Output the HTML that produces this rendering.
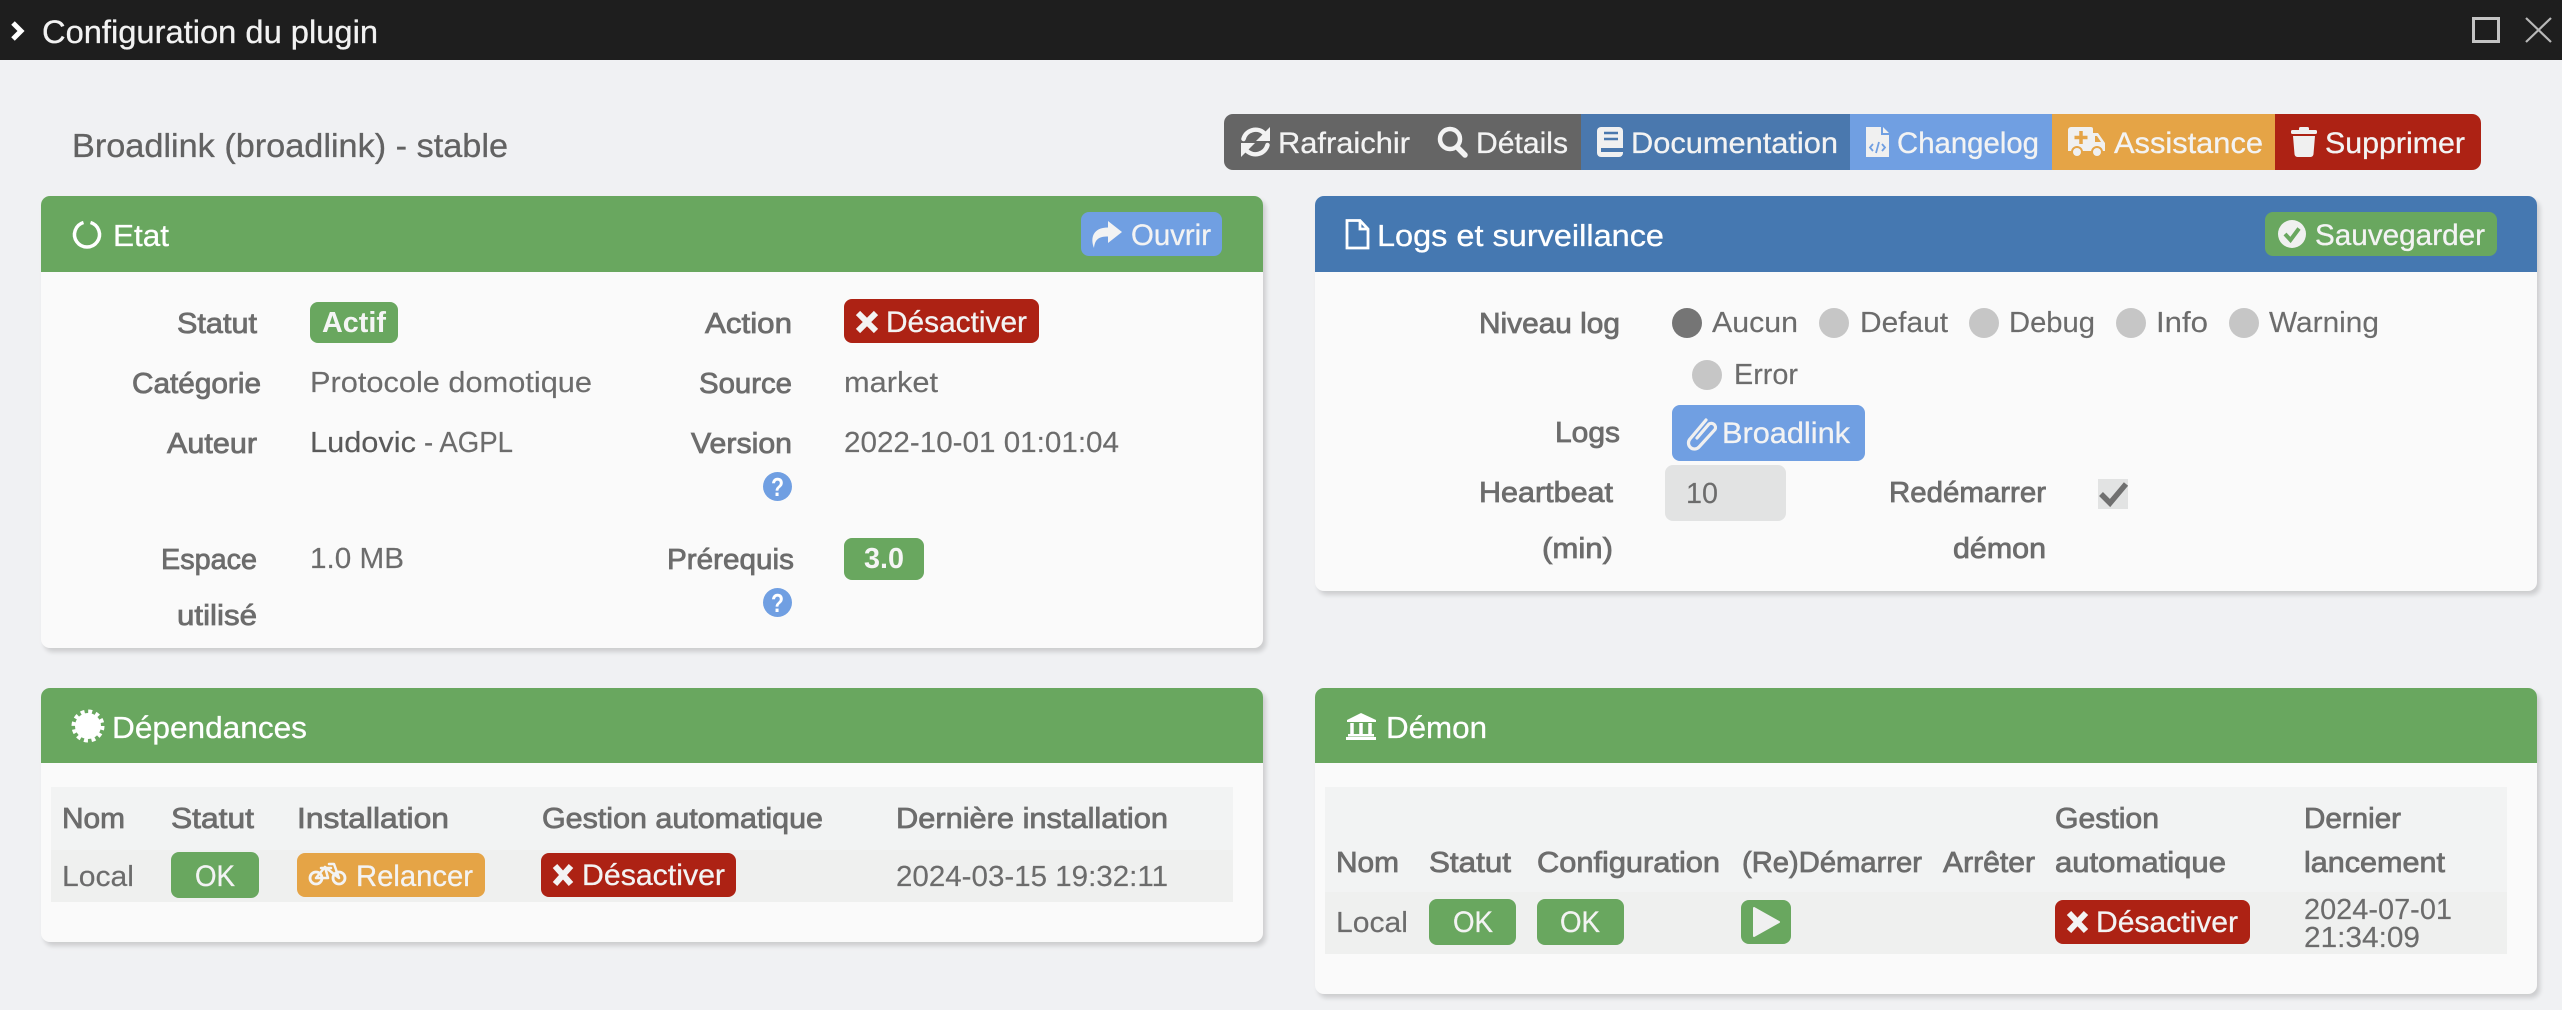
<!DOCTYPE html>
<html lang="fr">
<head>
<meta charset="utf-8">
<title>Configuration du plugin</title>
<style>
html,body{margin:0;padding:0;width:2562px;height:1010px;overflow:hidden;background:#f0f1f3}
.p{position:absolute;background:#fafafa;border-radius:9px;box-shadow:3px 4px 5px rgba(0,0,0,.15)}
svg{position:absolute;left:0;top:0;font-family:"Liberation Sans",sans-serif}
text{font-size:29px;fill:#6c6c6c;stroke:#6c6c6c;stroke-width:.15px}
.m{stroke:#6c6c6c;stroke-width:.8px}
.h{font-size:31px;fill:#fff;stroke:#fff;stroke-width:.3px}
.b{font-size:30px;fill:#f3f3f3;stroke:#f3f3f3;stroke-width:.3px}
.s{font-weight:bold;fill:#f5f5f5;stroke:none}
.k{fill:#5a5a5a;stroke:#5a5a5a}
.ic{fill:none;stroke:#f3f3f3;stroke-linecap:round;stroke-linejoin:round}
.x{stroke:#f3f3f3;stroke-width:6;stroke-linecap:butt}
</style>
</head>
<body>
<div class="p" style="left:41px;top:196px;width:1222px;height:452px"></div>
<div class="p" style="left:1315px;top:196px;width:1222px;height:395px"></div>
<div class="p" style="left:41px;top:688px;width:1222px;height:254px"></div>
<div class="p" style="left:1315px;top:688px;width:1222px;height:306px"></div>
<svg width="2562" height="1010" viewBox="0 0 2562 1010" xmlns="http://www.w3.org/2000/svg">
<!-- title bar -->
<rect x="0" y="0" width="2562" height="60" fill="#1e1e1e"/>
<polyline points="13,23 21,31 13,39" fill="none" stroke="#fff" stroke-width="5"/>
<text x="42" y="43" textLength="336" lengthAdjust="spacingAndGlyphs" style="font-size:32px;fill:#f2f2f2;stroke:#f2f2f2;stroke-width:.3px">Configuration du plugin</text>
<rect x="2473.5" y="18.5" width="25" height="23" fill="none" stroke="#c4c4c4" stroke-width="3"/>
<path d="M2526 18 L2551 42 M2551 18 L2526 42" stroke="#b8b8b8" stroke-width="2.2" fill="none"/>

<text x="72" y="157" textLength="436" lengthAdjust="spacingAndGlyphs" style="font-size:33px;fill:#626262;stroke:#626262;stroke-width:.3px">Broadlink (broadlink) - stable</text>

<!-- action group -->
<path d="M1233 114 H1581 V170 H1233 a9 9 0 0 1 -9 -9 V123 a9 9 0 0 1 9 -9Z" fill="#656565"/>
<rect x="1581" y="114" width="269" height="56" fill="#4a78ae"/>
<rect x="1850" y="114" width="202" height="56" fill="#709fe2"/>
<rect x="2052" y="114" width="223" height="56" fill="#e5a446"/>
<path d="M2275 114 H2472 a9 9 0 0 1 9 9 V161 a9 9 0 0 1 -9 9 H2275Z" fill="#ad2214"/>

<!-- refresh -->
<path class="ic" stroke-width="4.5" stroke-linecap="butt" d="M1243.5 139 A12.5 12.5 0 0 1 1264 133"/>
<polygon points="1270,127 1270,141 1256,141" fill="#f3f3f3"/>
<path class="ic" stroke-width="4.5" stroke-linecap="butt" d="M1267.5 145 A12.5 12.5 0 0 1 1247 151"/>
<polygon points="1241,157 1241,143 1255,143" fill="#f3f3f3"/>
<text class="b" x="1278" y="153" textLength="132" lengthAdjust="spacingAndGlyphs">Rafraichir</text>
<!-- search -->
<circle class="ic" cx="1450" cy="139" r="10" stroke-width="4.5"/>
<path class="ic" d="M1458 148 L1465 155" stroke-width="5.5"/>
<text class="b" x="1476" y="153" textLength="92" lengthAdjust="spacingAndGlyphs">Détails</text>
<!-- book -->
<rect x="1597" y="127" width="26" height="30" rx="4" fill="#f0f0f0"/>
<path d="M1604 133 H1618 M1604 139 H1618" stroke="#4a78ae" stroke-width="2.5"/>
<rect x="1601" y="148" width="22" height="4" fill="#4a78ae"/>
<text class="b" x="1631" y="153" textLength="207" lengthAdjust="spacingAndGlyphs">Documentation</text>
<!-- file code -->
<path d="M1866 127 H1881 V135 H1889 V157 H1866Z M1883 127 L1889 133 H1883Z" fill="#f0f0f0"/>
<path d="M1873 144 L1870 147.5 L1873 151 M1882 144 L1885 147.5 L1882 151 M1879 142 L1876 153" fill="none" stroke="#709fe2" stroke-width="1.8"/>
<text class="b" x="1897" y="153" textLength="142" lengthAdjust="spacingAndGlyphs">Changelog</text>
<!-- ambulance -->
<path d="M2071 127 H2091 a2 2 0 0 1 2 2 V133 H2098 L2105 143 V151 H2068 V130 a3 3 0 0 1 3 -3Z" fill="#f0f0f0"/>
<path d="M2081 131 V144 M2074.5 137.5 H2087.5" stroke="#e5a446" stroke-width="3.5"/>
<path d="M2095 136 V142 H2101 L2097 136Z" fill="#e5a446"/>
<circle cx="2077" cy="152" r="5" fill="#f0f0f0" stroke="#e5a446" stroke-width="2"/>
<circle cx="2097" cy="152" r="5" fill="#f0f0f0" stroke="#e5a446" stroke-width="2"/>
<text class="b" x="2114" y="153" textLength="149" lengthAdjust="spacingAndGlyphs">Assistance</text>
<!-- trash -->
<rect x="2291" y="130" width="26" height="4" rx="1.5" fill="#f0f0f0"/>
<rect x="2299" y="127" width="10" height="4" rx="1.5" fill="#f0f0f0"/>
<path d="M2293 136 H2315 L2313.5 154 a3 3 0 0 1 -3 3 H2297.5 a3 3 0 0 1 -3 -3Z" fill="#f0f0f0"/>
<text class="b" x="2325" y="153" textLength="140" lengthAdjust="spacingAndGlyphs">Supprimer</text>

<!-- Etat header -->
<path d="M50 196 H1254 a9 9 0 0 1 9 9 V272 H41 V205 a9 9 0 0 1 9 -9Z" fill="#69a75f"/>
<path d="M90.5 222.5 A12.5 12.5 0 1 1 83.5 222.5" fill="none" stroke="#fff" stroke-width="3.5"/>
<text class="h" x="113" y="246" textLength="56" lengthAdjust="spacingAndGlyphs">Etat</text>
<rect x="1081" y="212" width="141" height="44" rx="8" fill="#709fe2"/>
<path d="M1108 221 L1122 232 L1108 243 V236.5 C1099 236.5 1095 239 1094 248 C1090 238 1093 227.5 1108 227.5Z" fill="#f3f3f3"/>
<text class="b" x="1131" y="245" textLength="80" lengthAdjust="spacingAndGlyphs">Ouvrir</text>

<!-- Logs header -->
<path d="M1324 196 H2528 a9 9 0 0 1 9 9 V272 H1315 V205 a9 9 0 0 1 9 -9Z" fill="#4578b1"/>
<path d="M1347 220.5 H1360 L1368 229 V248 H1347Z M1360 220.5 V229 H1368" fill="none" stroke="#fff" stroke-width="2.8"/>
<text class="h" x="1377" y="246" textLength="287" lengthAdjust="spacingAndGlyphs">Logs et surveillance</text>
<rect x="2265" y="212" width="232" height="44" rx="8" fill="#69a75f"/>
<circle cx="2292" cy="234" r="14" fill="#f0f0f0"/>
<path d="M2285 234 L2290.5 240 L2299 228.5" fill="none" stroke="#69a75f" stroke-width="4"/>
<text class="b" x="2315" y="245" textLength="170" lengthAdjust="spacingAndGlyphs">Sauvegarder</text>

<!-- Etat body -->
<text class="m" x="177" y="333" textLength="80" lengthAdjust="spacingAndGlyphs">Statut</text>
<rect x="310" y="302" width="88" height="41" rx="8" fill="#69a75f"/>
<text class="s" x="322" y="332" textLength="64" lengthAdjust="spacingAndGlyphs">Actif</text>
<text class="m" x="705" y="333" textLength="87" lengthAdjust="spacingAndGlyphs">Action</text>
<rect x="844" y="299" width="195" height="44" rx="8" fill="#ad2214"/>
<path class="x" d="M858 313 L876 331 M876 313 L858 331"/>
<text class="b" x="886" y="332" textLength="141" lengthAdjust="spacingAndGlyphs">Désactiver</text>

<text class="m" x="132" y="393" textLength="129" lengthAdjust="spacingAndGlyphs">Catégorie</text>
<text x="310" y="392" textLength="282" lengthAdjust="spacingAndGlyphs">Protocole domotique</text>
<text class="m" x="699" y="393" textLength="93" lengthAdjust="spacingAndGlyphs">Source</text>
<text x="844" y="392" textLength="94" lengthAdjust="spacingAndGlyphs">market</text>

<text class="m" x="167" y="453" textLength="90" lengthAdjust="spacingAndGlyphs">Auteur</text>
<text class="k" x="310" y="452" textLength="106" lengthAdjust="spacingAndGlyphs">Ludovic</text>
<text x="424" y="452" textLength="89" lengthAdjust="spacingAndGlyphs">- AGPL</text>
<text class="m" x="691" y="453" textLength="101" lengthAdjust="spacingAndGlyphs">Version</text>
<text x="844" y="452" textLength="275" lengthAdjust="spacingAndGlyphs">2022-10-01 01:01:04</text>
<circle cx="777.5" cy="486.5" r="14.5" fill="#709fe2"/>
<text x="771" y="496" textLength="13" lengthAdjust="spacingAndGlyphs" style="font-size:26px;font-weight:bold;fill:#fff;stroke:none">?</text>

<text class="m" x="161" y="569" textLength="96" lengthAdjust="spacingAndGlyphs">Espace</text>
<text x="310" y="568" textLength="94" lengthAdjust="spacingAndGlyphs">1.0 MB</text>
<text class="m" x="667" y="569" textLength="127" lengthAdjust="spacingAndGlyphs">Prérequis</text>
<rect x="844" y="538" width="80" height="42" rx="8" fill="#69a75f"/>
<text class="s" x="864" y="568" textLength="40" lengthAdjust="spacingAndGlyphs">3.0</text>
<circle cx="777.5" cy="602.5" r="14.5" fill="#709fe2"/>
<text x="771" y="612" textLength="13" lengthAdjust="spacingAndGlyphs" style="font-size:26px;font-weight:bold;fill:#fff;stroke:none">?</text>
<text class="m" x="177" y="625" textLength="80" lengthAdjust="spacingAndGlyphs">utilisé</text>

<!-- Logs body -->
<text class="m" x="1479" y="333" textLength="141" lengthAdjust="spacingAndGlyphs">Niveau log</text>
<circle cx="1687" cy="323" r="15" fill="#757575"/>
<text x="1712" y="332" textLength="86" lengthAdjust="spacingAndGlyphs">Aucun</text>
<circle cx="1834" cy="323" r="15" fill="#c6c6c6"/>
<text x="1860" y="332" textLength="88" lengthAdjust="spacingAndGlyphs">Defaut</text>
<circle cx="1984" cy="323" r="15" fill="#c6c6c6"/>
<text x="2009" y="332" textLength="86" lengthAdjust="spacingAndGlyphs">Debug</text>
<circle cx="2131" cy="323" r="15" fill="#c6c6c6"/>
<text x="2156" y="332" textLength="52" lengthAdjust="spacingAndGlyphs">Info</text>
<circle cx="2244" cy="323" r="15" fill="#c6c6c6"/>
<text x="2269" y="332" textLength="110" lengthAdjust="spacingAndGlyphs">Warning</text>
<circle cx="1707" cy="375" r="15" fill="#c6c6c6"/>
<text x="1734" y="384" textLength="64" lengthAdjust="spacingAndGlyphs">Error</text>

<text class="m" x="1555" y="442" textLength="65" lengthAdjust="spacingAndGlyphs">Logs</text>
<rect x="1672" y="405" width="193" height="56" rx="8" fill="#709fe2"/>
<path d="M1697 438 L1709 424 a4.2 4.2 0 0 1 6 5.5 L1699 447 a6 6 0 0 1 -9 -8 L1706 420" fill="none" stroke="#f0f0f0" stroke-width="3.2" stroke-linecap="round"/>
<text class="b" x="1722" y="443" textLength="128" lengthAdjust="spacingAndGlyphs">Broadlink</text>

<text class="m" x="1479" y="502" textLength="134" lengthAdjust="spacingAndGlyphs">Heartbeat</text>
<text class="m" x="1542" y="558" textLength="71" lengthAdjust="spacingAndGlyphs">(min)</text>
<rect x="1665" y="465" width="121" height="56" rx="8" fill="#e2e3e3"/>
<text x="1686" y="503" textLength="32" lengthAdjust="spacingAndGlyphs">10</text>
<text class="m" x="1889" y="502" textLength="157" lengthAdjust="spacingAndGlyphs">Redémarrer</text>
<text class="m" x="1953" y="558" textLength="93" lengthAdjust="spacingAndGlyphs">démon</text>
<rect x="2098" y="479" width="30" height="30" fill="#e2e3e3"/>
<path d="M2101 494 L2110 503 L2126 484" fill="none" stroke="#707070" stroke-width="5.5"/>

<!-- Dependances -->
<path d="M50 688 H1254 a9 9 0 0 1 9 9 V763 H41 V697 a9 9 0 0 1 9 -9Z" fill="#69a75f"/>
<circle cx="88" cy="726" r="13" fill="#fff"/>
<circle cx="88" cy="726" r="14.5" fill="none" stroke="#fff" stroke-width="4" stroke-dasharray="4 3.6"/>
<text class="h" x="112" y="738" textLength="195" lengthAdjust="spacingAndGlyphs">Dépendances</text>
<rect x="51" y="787" width="1182" height="63" fill="#f2f3f3"/>
<rect x="51" y="850" width="1182" height="52" fill="#eff0ef"/>
<g>
<text class="m" x="62" y="828" textLength="63" lengthAdjust="spacingAndGlyphs">Nom</text>
<text class="m" x="171" y="828" textLength="83" lengthAdjust="spacingAndGlyphs">Statut</text>
<text class="m" x="297" y="828" textLength="152" lengthAdjust="spacingAndGlyphs">Installation</text>
<text class="m" x="542" y="828" textLength="281" lengthAdjust="spacingAndGlyphs">Gestion automatique</text>
<text class="m" x="896" y="828" textLength="272" lengthAdjust="spacingAndGlyphs">Dernière installation</text>
</g>
<text x="62" y="886" textLength="72" lengthAdjust="spacingAndGlyphs">Local</text>
<rect x="171" y="852" width="88" height="46" rx="8" fill="#69a75f"/>
<text class="b" x="195" y="886" textLength="40" lengthAdjust="spacingAndGlyphs">OK</text>
<rect x="297" y="853" width="188" height="44" rx="8" fill="#e5a446"/>
<circle class="ic" cx="316" cy="878" r="6" stroke-width="2.8"/>
<circle class="ic" cx="339" cy="878" r="6" stroke-width="2.8"/>
<path class="ic" stroke-width="2.5" d="M316 878 L325 867 L339 878 M321 868 H331 M329 864 H334 L339 878 M325 867 L328 878 H316"/>
<text class="b" x="356" y="886" textLength="117" lengthAdjust="spacingAndGlyphs">Relancer</text>
<rect x="541" y="853" width="195" height="44" rx="8" fill="#ad2214"/>
<path class="x" d="M555 866 L571 884 M571 866 L555 884"/>
<text class="b" x="582" y="885" textLength="143" lengthAdjust="spacingAndGlyphs">Désactiver</text>
<text x="896" y="886" textLength="272" lengthAdjust="spacingAndGlyphs">2024-03-15 19:32:11</text>

<!-- Demon -->
<path d="M1324 688 H2528 a9 9 0 0 1 9 9 V763 H1315 V697 a9 9 0 0 1 9 -9Z" fill="#69a75f"/>
<path d="M1361 713 L1376 720 V722 H1347 V720Z" fill="#fff"/>
<path d="M1352 723 V735 M1361 723 V735 M1370 723 V735" stroke="#fff" stroke-width="3.5"/>
<rect x="1348" y="734" width="26" height="2.5" fill="#fff"/>
<rect x="1346" y="737" width="30" height="3" fill="#fff"/>
<text class="h" x="1386" y="738" textLength="101" lengthAdjust="spacingAndGlyphs">Démon</text>
<rect x="1325" y="787" width="1182" height="105" fill="#f2f3f3"/>
<rect x="1325" y="892" width="1182" height="62" fill="#eff0ef"/>
<text class="m" x="2055" y="828" textLength="104" lengthAdjust="spacingAndGlyphs">Gestion</text>
<text class="m" x="2304" y="828" textLength="97" lengthAdjust="spacingAndGlyphs">Dernier</text>
<text class="m" x="1336" y="872" textLength="63" lengthAdjust="spacingAndGlyphs">Nom</text>
<text class="m" x="1429" y="872" textLength="82" lengthAdjust="spacingAndGlyphs">Statut</text>
<text class="m" x="1537" y="872" textLength="183" lengthAdjust="spacingAndGlyphs">Configuration</text>
<text class="m" x="1742" y="872" textLength="180" lengthAdjust="spacingAndGlyphs">(Re)Démarrer</text>
<text class="m" x="1943" y="872" textLength="92" lengthAdjust="spacingAndGlyphs">Arrêter</text>
<text class="m" x="2055" y="872" textLength="171" lengthAdjust="spacingAndGlyphs">automatique</text>
<text class="m" x="2304" y="872" textLength="141" lengthAdjust="spacingAndGlyphs">lancement</text>
<text x="1336" y="932" textLength="72" lengthAdjust="spacingAndGlyphs">Local</text>
<rect x="1429" y="899" width="87" height="46" rx="8" fill="#69a75f"/>
<text class="b" x="1453" y="932" textLength="40" lengthAdjust="spacingAndGlyphs">OK</text>
<rect x="1537" y="899" width="87" height="46" rx="8" fill="#69a75f"/>
<text class="b" x="1560" y="932" textLength="40" lengthAdjust="spacingAndGlyphs">OK</text>
<rect x="1741" y="900" width="50" height="44" rx="8" fill="#69a75f"/>
<polygon points="1754,908 1779,922 1754,936" fill="#f0f0f0" stroke="#f0f0f0" stroke-width="2" stroke-linejoin="round"/>
<rect x="2055" y="900" width="195" height="44" rx="8" fill="#ad2214"/>
<path class="x" d="M2069 913 L2086 931 M2086 913 L2069 931"/>
<text class="b" x="2096" y="932" textLength="142" lengthAdjust="spacingAndGlyphs">Désactiver</text>
<text x="2304" y="919" textLength="148" lengthAdjust="spacingAndGlyphs">2024-07-01</text>
<text x="2304" y="947" textLength="116" lengthAdjust="spacingAndGlyphs">21:34:09</text>
</svg>
</body>
</html>
